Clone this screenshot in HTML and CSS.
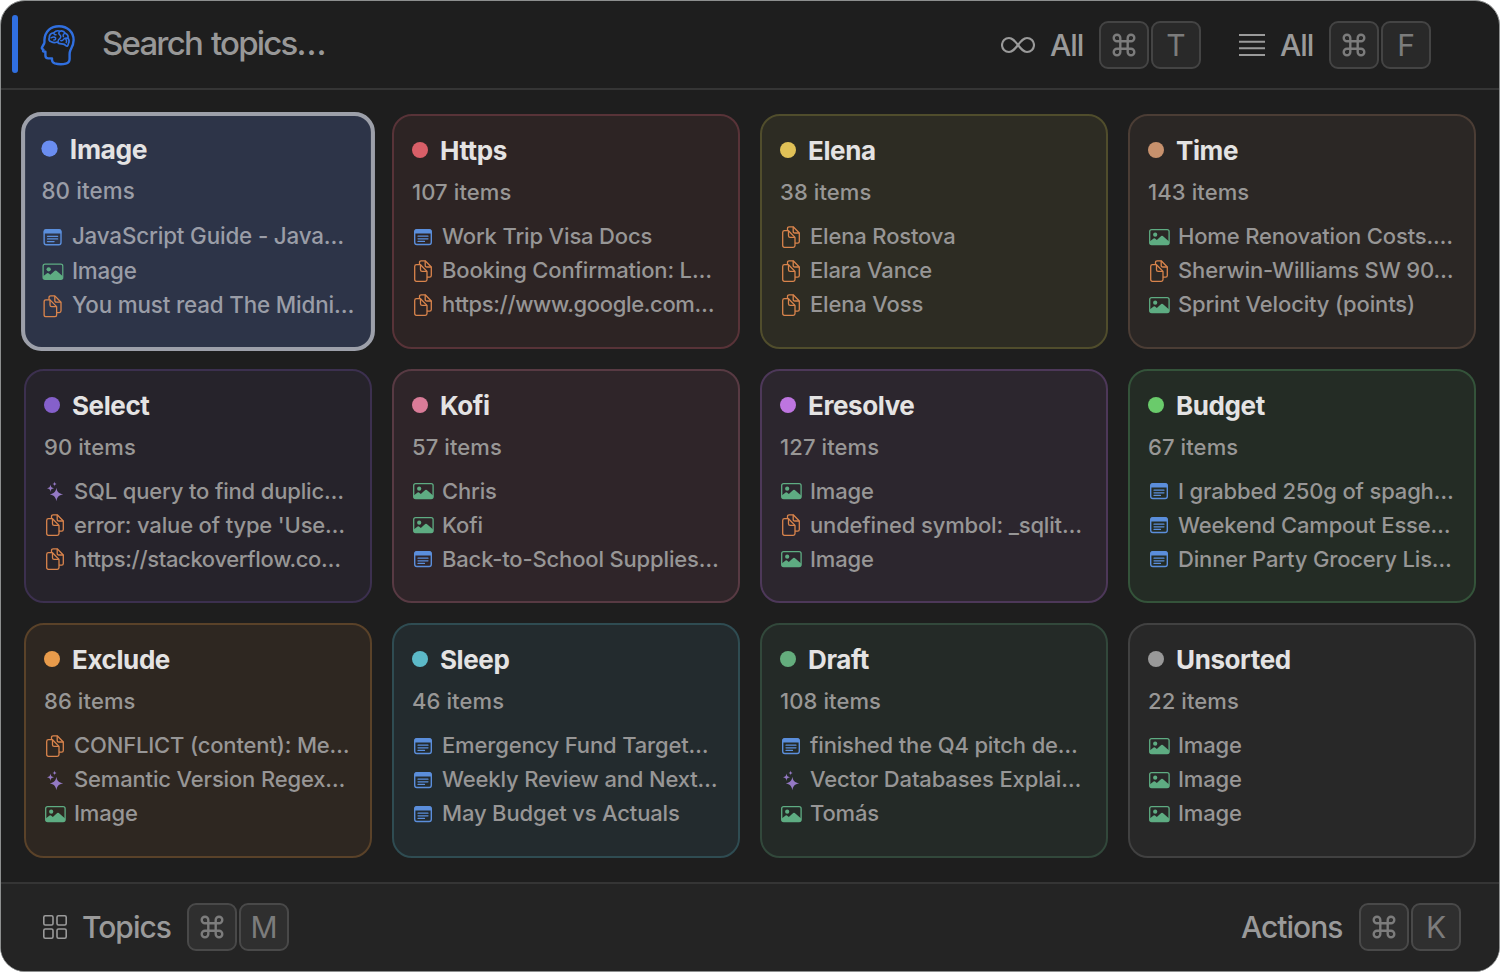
FILE: index.html
```html
<!DOCTYPE html>
<html lang="en">
<head>
    <meta charset="utf-8">
    <meta name="viewport" content="width=device-width, initial-scale=1.0">
    <title>Topics</title>
    <link rel="stylesheet" href="styles.css">
</head>
<body>

<svg class="sprite">
    <symbol id="note" viewBox="0 0 22 22">
        <rect x="2.7" y="3.7" width="16.6" height="14.8" rx="2.2" fill="none" stroke="currentColor" stroke-width="1.4"/>
        <path d="M2.4 7.4V5.6Q2.4 3.2 4.8 3.2H17.2Q19.6 3.2 19.6 5.6V7.4Z" fill="currentColor"/>
        <path d="M6 10.2H16M6 12.8H16M6 15.4H12.5" stroke="currentColor" stroke-width="1.2" stroke-linecap="round"/>
    </symbol>
    <symbol id="picture" viewBox="0 0 22 22">
        <rect x="1.7" y="3.6" width="19.4" height="14.9" rx="2" fill="none" stroke="currentColor" stroke-width="1.3"/>
        <circle cx="7.2" cy="8.7" r="2.1" fill="currentColor"/>
        <path d="M1.7 15.6L5.6 12.6Q6.3 12.1 7 12.6L8.8 14.1L13.2 10.1Q14 9.5 14.8 10.1L21.1 15.4V17Q21.1 18.8 19.2 18.8H3.6Q1.7 18.8 1.7 17Z" fill="currentColor"/>
    </symbol>
    <symbol id="docs" viewBox="0 0 22 22">
        <g fill="none" stroke="currentColor" stroke-width="1.3" stroke-linejoin="round">
            <path d="M4.5 4.7H8.5L15 11.4V19.6Q15 21.3 13.3 21.3H4.4Q2.7 21.3 2.7 19.6V6.5Q2.7 4.7 4.5 4.7Z"/>
            <path d="M8.5 4.7V9.8Q8.5 11.4 10.1 11.4H15"/>
            <path d="M7.5 4.5V2.4Q7.5.8 9.2.8H13.2L19.3 7V15.5Q19.3 17.2 17.6 17.2H15"/>
            <path d="M13.2.8V5.4Q13.2 7 14.8 7H19.3"/>
        </g>
    </symbol>
    <symbol id="sparkles" viewBox="0 0 22 22">
        <path fill="currentColor" d="M12.4 7.8C13.1 12.2 14.6 13.5 19.2 14.4C14.6 15.3 13.1 16.7 12.4 21.2C11.6 16.7 10 15.3 5.8 14.4C10 13.5 11.6 12.2 12.4 7.8Z"/>
        <path fill="currentColor" d="M6.5 4.6C6.8 7.2 7.5 7.8 10 8.3C7.5 8.8 6.8 9.4 6.5 12C6.1 9.4 5.4 8.8 3 8.3C5.4 7.8 6.1 7.2 6.5 4.6Z"/>
        <path fill="currentColor" d="M10.6 1.6C10.8 3.3 11.3 3.7 12.8 4C11.3 4.3 10.8 4.7 10.6 6.4C10.4 4.7 9.9 4.3 8.4 4C9.9 3.7 10.4 3.3 10.6 1.6Z"/>
    </symbol>
    <symbol id="cmd" viewBox="0 0 24 24">
        <path fill="none" stroke="currentColor" stroke-width="2.4" d="M8.3 8.3H15.7V15.7H8.3ZM8.3 8.3H5.1A3.3 3.3 0 1 1 8.3 5ZM15.7 8.3V5A3.3 3.3 0 1 1 18.9 8.3ZM15.7 15.7H18.9A3.3 3.3 0 1 1 15.7 19ZM8.3 15.7V19A3.3 3.3 0 1 1 5.1 15.7Z"/>
    </symbol>
</svg>

<div class="window">
    <header class="topbar">
        <span class="accent"></span>
        <svg class="brain" viewBox="0 0 36 42">
            <g fill="none" stroke="currentColor" stroke-linejoin="round" stroke-linecap="round">
                <path stroke-width="2.4" d="M4.4 16.2C4.8 7.2 10.8 2.2 19 2.2C27.6 2.2 33.6 8 33.6 16.2C33.6 20.8 32 23.2 30.4 26.2Q29.6 28 29.6 30.2V35Q29.6 38.6 25.8 39.6Q20.4 41 14.8 39.4Q12.2 38.4 12 36V34.4H8.2Q5.4 34.4 5.4 31.6V27.6H3.6Q3 27.6 3 26.8L3.4 25.6Q1.4 24.8 2 23.4L4.2 19.4Q4.6 18.4 4.4 16.2Z"/>
                <path stroke-width="1.7" d="M11.4 17.8Q8.2 16.8 9.2 13.4Q9.6 9 13.8 8.8Q16.4 5.8 20 7.2Q23.4 6.2 25.2 9.2Q28.6 10.6 28 14Q30 17 28.4 19.6Q28 22.8 26 21.8Q24.6 19.8 21.8 19.8Q18.6 20 17.2 18Q14 19.4 11.4 17.8Z"/>
                <path stroke-width="1.5" d="M13.8 9Q14 11 16 10.8M11 13.8Q14.2 12 15.6 14Q16 16 13.8 16M20 7.4Q17.8 9 19.6 10.6Q21.8 12.4 20 14.4Q18 15.8 18 17.8M24.8 9.4Q22.4 10.4 23.4 12.6M27.8 14.2Q24.6 13.4 23.6 15.4Q22.4 17 20.8 16.6M25.8 15Q27.2 17 26.2 18.6"/>
            </g>
        </svg>
        <span class="search">Search topics…</span>
        <div class="filter">
            <svg class="infinity" viewBox="0 0 34 18"><path d="M17 9C13.5 4.5 11.5 2 8 2A7 7 0 0 0 8 16C11.5 16 13.5 13.5 17 9C20.5 4.5 22.5 2 26 2A7 7 0 0 1 26 16C22.5 16 20.5 13.5 17 9Z" fill="none" stroke="currentColor" stroke-width="2.1"/></svg>
            <span class="label">All</span>
            <kbd><svg><use href="#cmd"/></svg></kbd>
            <kbd>T</kbd>
        </div>
        <div class="filter second">
            <svg class="lines" viewBox="0 0 26 22"><path d="M0 1H26M0 7.7H26M0 14.3H26M0 21H26" stroke="currentColor" stroke-width="1.9"/></svg>
            <span class="label">All</span>
            <kbd><svg><use href="#cmd"/></svg></kbd>
            <kbd>F</kbd>
        </div>
    </header>

    <main class="grid">
        <section class="card blue selected">
            <h3>Image</h3>
            <p>80 items</p>
            <ul>
                <li><svg class="note"><use href="#note"/></svg>JavaScript Guide - Java…</li>
                <li><svg class="picture"><use href="#picture"/></svg>Image</li>
                <li><svg class="docs"><use href="#docs"/></svg>You must read The Midni…</li>
            </ul>
        </section>
        <section class="card red">
            <h3>Https</h3>
            <p>107 items</p>
            <ul>
                <li><svg class="note"><use href="#note"/></svg>Work Trip Visa Docs</li>
                <li><svg class="docs"><use href="#docs"/></svg>Booking Confirmation: L…</li>
                <li class="url"><svg class="docs"><use href="#docs"/></svg>https://www.google.com…</li>
            </ul>
        </section>
        <section class="card yellow">
            <h3>Elena</h3>
            <p>38 items</p>
            <ul>
                <li><svg class="docs"><use href="#docs"/></svg>Elena Rostova</li>
                <li><svg class="docs"><use href="#docs"/></svg>Elara Vance</li>
                <li><svg class="docs"><use href="#docs"/></svg>Elena Voss</li>
            </ul>
        </section>
        <section class="card brown">
            <h3>Time</h3>
            <p>143 items</p>
            <ul>
                <li><svg class="picture"><use href="#picture"/></svg>Home Renovation Costs.…</li>
                <li><svg class="docs"><use href="#docs"/></svg>Sherwin-Williams SW 90…</li>
                <li><svg class="picture"><use href="#picture"/></svg>Sprint Velocity (points)</li>
            </ul>
        </section>

        <section class="card purple">
            <h3>Select</h3>
            <p>90 items</p>
            <ul>
                <li><svg class="sparkles"><use href="#sparkles"/></svg>SQL query to find duplic…</li>
                <li><svg class="docs"><use href="#docs"/></svg>error: value of type 'Use…</li>
                <li class="url"><svg class="docs"><use href="#docs"/></svg>https://stackoverflow.co…</li>
            </ul>
        </section>
        <section class="card pink">
            <h3>Kofi</h3>
            <p>57 items</p>
            <ul>
                <li><svg class="picture"><use href="#picture"/></svg>Chris</li>
                <li><svg class="picture"><use href="#picture"/></svg>Kofi</li>
                <li><svg class="note"><use href="#note"/></svg>Back-to-School Supplies…</li>
            </ul>
        </section>
        <section class="card violet">
            <h3>Eresolve</h3>
            <p>127 items</p>
            <ul>
                <li><svg class="picture"><use href="#picture"/></svg>Image</li>
                <li><svg class="docs"><use href="#docs"/></svg>undefined symbol: _sqlit…</li>
                <li><svg class="picture"><use href="#picture"/></svg>Image</li>
            </ul>
        </section>
        <section class="card green">
            <h3>Budget</h3>
            <p>67 items</p>
            <ul>
                <li><svg class="note"><use href="#note"/></svg>I grabbed 250g of spagh…</li>
                <li><svg class="note"><use href="#note"/></svg>Weekend Campout Esse…</li>
                <li><svg class="note"><use href="#note"/></svg>Dinner Party Grocery Lis…</li>
            </ul>
        </section>

        <section class="card orange">
            <h3>Exclude</h3>
            <p>86 items</p>
            <ul>
                <li><svg class="docs"><use href="#docs"/></svg>CONFLICT (content): Me…</li>
                <li><svg class="sparkles"><use href="#sparkles"/></svg>Semantic Version Regex…</li>
                <li><svg class="picture"><use href="#picture"/></svg>Image</li>
            </ul>
        </section>
        <section class="card teal">
            <h3>Sleep</h3>
            <p>46 items</p>
            <ul>
                <li><svg class="note"><use href="#note"/></svg>Emergency Fund Target…</li>
                <li><svg class="note"><use href="#note"/></svg>Weekly Review and Next…</li>
                <li><svg class="note"><use href="#note"/></svg>May Budget vs Actuals</li>
            </ul>
        </section>
        <section class="card mint">
            <h3>Draft</h3>
            <p>108 items</p>
            <ul>
                <li><svg class="note"><use href="#note"/></svg>finished the Q4 pitch de…</li>
                <li><svg class="sparkles"><use href="#sparkles"/></svg>Vector Databases Explai…</li>
                <li><svg class="picture"><use href="#picture"/></svg>Tomás</li>
            </ul>
        </section>
        <section class="card gray">
            <h3>Unsorted</h3>
            <p>22 items</p>
            <ul>
                <li><svg class="picture"><use href="#picture"/></svg>Image</li>
                <li><svg class="picture"><use href="#picture"/></svg>Image</li>
                <li><svg class="picture"><use href="#picture"/></svg>Image</li>
            </ul>
        </section>
    </main>

    <footer class="bottombar">
        <svg class="tiles" viewBox="0 0 24 24">
            <g fill="none" stroke="currentColor" stroke-width="1.6">
                <rect x=".8" y=".8" width="9.2" height="9.2" rx="1.5"/>
                <rect x="14" y=".8" width="9.2" height="9.2" rx="1.5"/>
                <rect x=".8" y="14" width="9.2" height="9.2" rx="1.5"/>
                <rect x="14" y="14" width="9.2" height="9.2" rx="1.5"/>
            </g>
        </svg>
        <span class="label topics">Topics</span>
        <kbd><svg><use href="#cmd"/></svg></kbd>
        <kbd>M</kbd>
        <span class="label actions">Actions</span>
        <kbd><svg><use href="#cmd"/></svg></kbd>
        <kbd>K</kbd>
    </footer>
</div>

</body>
</html>
```
FILE: styles.css
```css
* {
    box-sizing: border-box;
}
body {
    margin: 0;
    background: #fff;
    font-family: Inter, 'Liberation Sans', sans-serif;
}
.sprite {
    display: none;
}
.window {
    width: 1500px;
    height: 972px;
    display: flex;
    flex-direction: column;
    overflow: hidden;
    background: #1e1e1e;
    border: 1px solid #8d8f8f;
    border-radius: 25px;
}
.topbar {
    display: flex;
    align-items: center;
    height: 89px;
    padding: 0 68px 2px 11px;
    border-bottom: 2px solid #353535;
    color: #9a9a9a;
}
.accent {
    width: 6px;
    height: 58px;
    border-radius: 3px;
    background: #306fe0;
}
.brain {
    width: 36px;
    height: 42px;
    margin: 2px 0 0 22px;
    color: #306fdf;
}
.search {
    flex: 1;
    margin: 0 0 2px 26px;
    font-size: 33px;
    font-weight: 450;
    line-height: 40px;
    letter-spacing: -1.8px;
    word-spacing: 2px;
    color: #989898;
}
.filter {
    display: flex;
    align-items: center;
    gap: 2px;
    margin-top: 2px;
}
.second {
    margin-left: 38px;
}
.infinity {
    width: 34px;
    height: 18px;
}
.lines {
    width: 26px;
    height: 22px;
}
.label {
    font-size: 30px;
    font-weight: 450;
    line-height: 36px;
    letter-spacing: -1px;
}
.filter .label {
    width: 47px;
    margin-left: 13px;
}
kbd {
    display: flex;
    justify-content: center;
    align-items: center;
    width: 50px;
    height: 48px;
    border: 2px solid #444;
    border-radius: 9px;
    background: #292929;
    color: #7c7c7c;
    font-family: inherit;
    font-size: 30px;
    font-weight: 400;
}
kbd svg {
    width: 24px;
    height: 24px;
}
.grid {
    flex: 1;
    display: grid;
    grid-template-columns: repeat(4, 348px);
    grid-template-rows: repeat(3, 1fr);
    gap: 20px;
    padding: 24px 23px;
}
.card {
    padding: 19px 18px 0;
    border: 2px solid;
    border-radius: 20px;
    white-space: nowrap;
}
.card h3 {
    display: flex;
    align-items: center;
    gap: 12px;
    margin: 0;
    font-size: 26px;
    font-weight: 700;
    line-height: 32px;
    letter-spacing: -0.4px;
    color: #e4e3e3;
}
.card h3::before {
    content: "";
    width: 16px;
    height: 16px;
    margin-bottom: 2px;
    border-radius: 50%;
    background: var(--dot);
}
.card p {
    margin: 11px 0 13px;
    font-size: 22px;
    font-weight: 450;
    line-height: 28px;
    letter-spacing: 0.1px;
    color: #989796;
}
.card ul {
    margin: 0;
    padding: 0;
    list-style: none;
}
.card li {
    display: flex;
    align-items: center;
    gap: 8px;
    height: 34px;
    font-size: 22px;
    font-weight: 450;
    letter-spacing: -0.16px;
    color: #979696;
}
.card li.url {
    letter-spacing: -0.35px;
}
.card li svg {
    flex: none;
    width: 22px;
    height: 22px;
    margin-top: 1px;
}
.note { color: #5b8edb; }
.picture { color: #5eac82; }
.docs { color: #d9844c; }
.sparkles { color: #9479c4; }

.blue { --dot: #6a8df0; }
.red { --dot: #d85f68; background: #2d2424; border-color: #583338; }
.yellow { --dot: #e0c157; background: #2d2c23; border-color: #504d2c; }
.brown { --dot: #c7916d; background: #2b2725; border-color: #4b3d35; }
.purple { --dot: #8560cb; background: #26232b; border-color: #3c304f; }
.pink { --dot: #d97c98; background: #2f2529; border-color: #583a43; }
.violet { --dot: #be75e0; background: #2c262e; border-color: #4d3859; }
.green { --dot: #6acb6b; background: #242c25; border-color: #34533a; }
.orange { --dot: #e89b4b; background: #2e2721; border-color: #5a4229; }
.teal { --dot: #5cb9c8; background: #232b2e; border-color: #2f4c52; }
.mint { --dot: #64ad7d; background: #242a27; border-color: #32483b; }
.gray { --dot: #999; background: #282828; border-color: #414141; }

/* keyboard focus */
.selected {
    padding: 17px 16px 0;
    border: 4px solid #9da0aa;
    background: #2d3448;
    transform: scale(1.017);
}
.selected p,
.selected li {
    color: #9a9da7;
}
.bottombar {
    display: flex;
    align-items: center;
    gap: 2px;
    height: 89px;
    padding: 0 38px 2px 42px;
    border-top: 2px solid #353535;
    background: #242424;
    color: #9a9a9a;
}
.bottombar kbd {
    background: #2f2f2f;
    border-color: #494949;
}
.tiles {
    width: 24px;
    height: 24px;
}
.topics {
    width: 103px;
    margin-left: 13px;
}
.actions {
    width: 116px;
    margin-left: auto;
}
```
